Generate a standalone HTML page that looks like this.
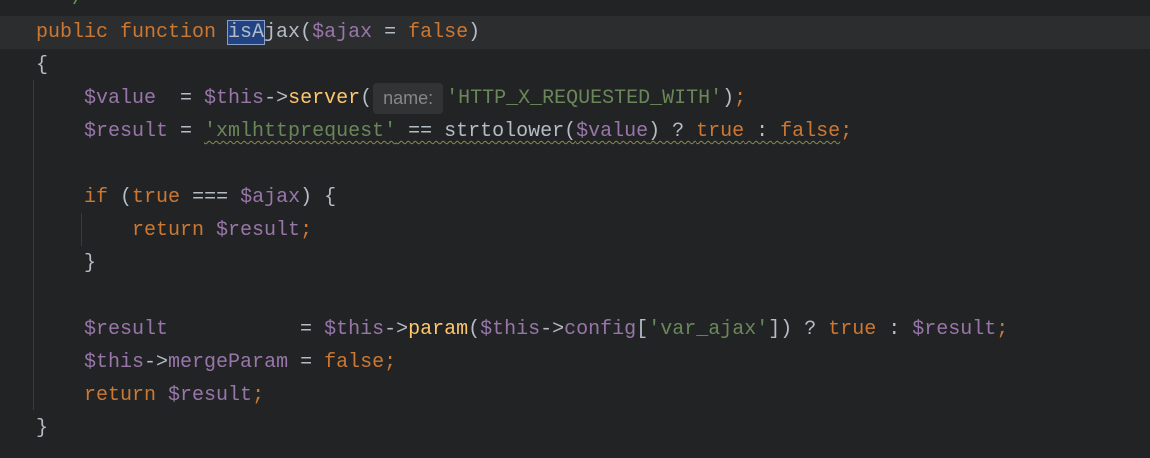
<!DOCTYPE html>
<html><head><meta charset="utf-8"><style>
html,body{margin:0;padding:0;}
body{width:1150px;height:458px;background:#222324;overflow:hidden;position:relative;
font-family:"Liberation Mono",monospace;font-size:20px;color:#b4bcc6;}
.l{position:absolute;left:36px;height:33px;line-height:33px;white-space:pre;}
.k{color:#cc7832}.v{color:#9876aa}.s{color:#6a8759}.f{color:#ffc66d}.c{color:#629755}
.hl{position:absolute;left:0;top:16px;width:1150px;height:33px;background:#2c2d2f;}
.sel{background:#214283;outline:1px solid #8aa0c8;}
.hint{display:inline-block;background:#323335;color:#858789;font-family:"Liberation Sans",sans-serif;font-size:18px;border-radius:4px;height:31px;line-height:31px;width:70px;text-align:center;margin:0 3px 0 1px;vertical-align:top;margin-top:1px;}
.g{position:absolute;width:1px;background:#3a3b3d;}
.w{text-decoration:underline wavy #8a8a50;text-decoration-thickness:1px;text-underline-offset:4px;}
</style></head><body>
<div class="hl"></div>
<div class="g" style="left:33px;top:80px;height:330px"></div>
<div class="g" style="left:81px;top:213px;height:33px"></div>
<div class="l c" style="top:-17px">  */</div>
<div class="l" style="top:16px"><span class="k">public function </span><span class="sel">isA</span>jax(<span class="v">$ajax</span> = <span class="k">false</span>)</div>
<div class="l" style="top:49px">{</div>
<div class="l" style="top:82px">    <span class="v">$value</span>  = <span class="v">$this</span>-&gt;<span class="f">server</span>(<span class="hint">name:</span><span class="s">'HTTP_X_REQUESTED_WITH'</span>)<span class="k">;</span></div>
<div class="l" style="top:115px">    <span class="v">$result</span> = <span class="w"><span class="s">'xmlhttprequest'</span> == strtolower(<span class="v">$value</span>) ? <span class="k">true</span> : <span class="k">false</span></span><span class="k">;</span></div>
<div class="l" style="top:181px">    <span class="k">if</span> (<span class="k">true</span> === <span class="v">$ajax</span>) {</div>
<div class="l" style="top:214px">        <span class="k">return</span> <span class="v">$result</span><span class="k">;</span></div>
<div class="l" style="top:247px">    }</div>
<div class="l" style="top:313px">    <span class="v">$result</span>           = <span class="v">$this</span>-&gt;<span class="f">param</span>(<span class="v">$this</span>-&gt;<span class="v">config</span>[<span class="s">'var_ajax'</span>]) ? <span class="k">true</span> : <span class="v">$result</span><span class="k">;</span></div>
<div class="l" style="top:346px">    <span class="v">$this</span>-&gt;<span class="v">mergeParam</span> = <span class="k">false;</span></div>
<div class="l" style="top:379px">    <span class="k">return</span> <span class="v">$result</span><span class="k">;</span></div>
<div class="l" style="top:412px">}</div>
</body></html>
